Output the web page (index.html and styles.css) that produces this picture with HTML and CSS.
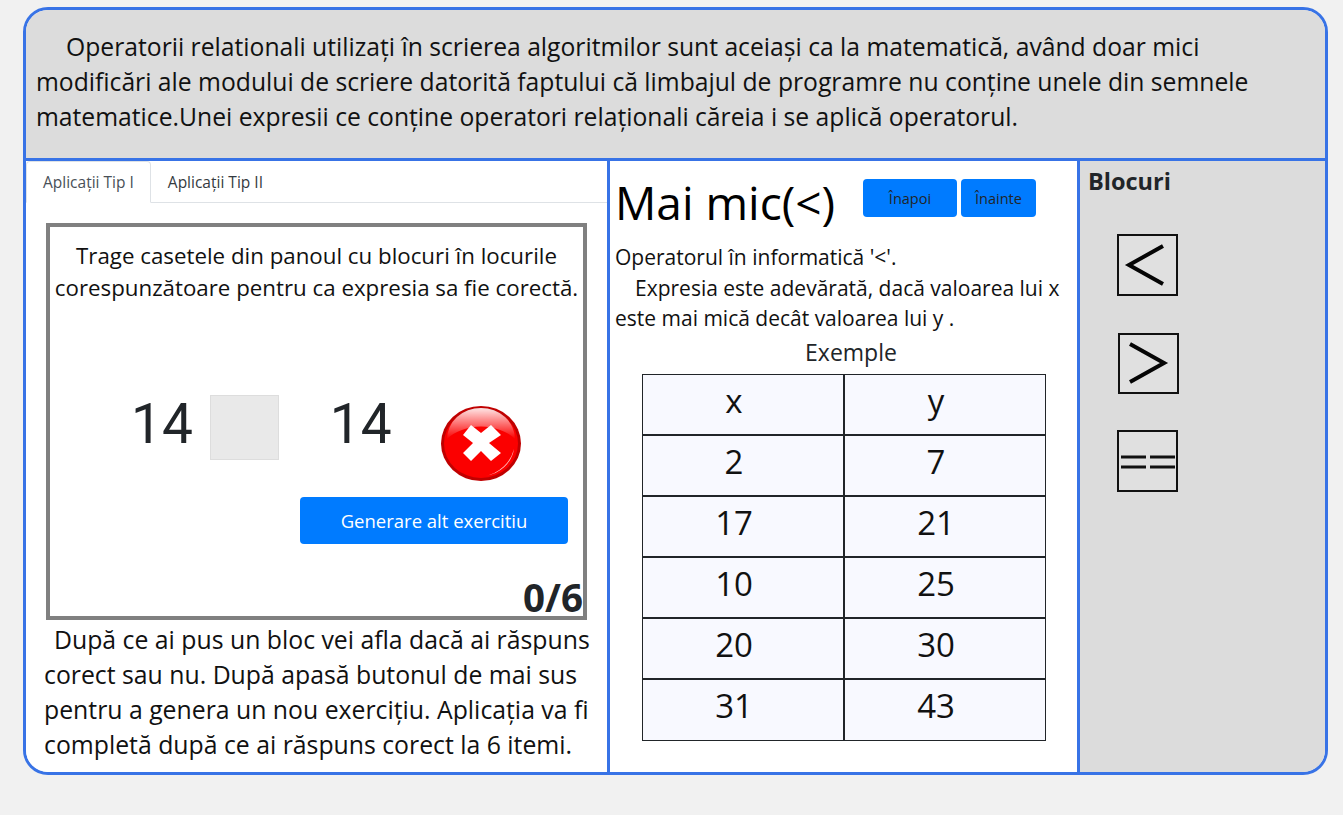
FILE: index.html
```html
<!DOCTYPE html>
<html lang="ro">
<head>
  <meta charset="UTF-8" />
  <meta name="viewport" content="width=device-width, initial-scale=1.0" />
  <title>Operatori relationali</title>
  <link rel="stylesheet" href="styles.css">
</head>
<body>
  <div class="frame">
    <div class="intro">
      <p>Operatorii relationali utilizați în scrierea algoritmilor sunt aceiași ca la matematică, având doar mici<br>modificări ale modului de scriere datorită faptului că limbajul de programre nu conține unele din semnele<br>matematice.Unei expresii ce conține operatori relaționali căreia i se aplică operatorul.</p>
    </div>
    <div class="columns">
      <div class="col-left">
        <ul class="tabs">
          <li class="tab active">Aplicații Tip I</li>
          <li class="tab">Aplicații Tip II</li>
        </ul>
        <div class="game">
          <p class="game-text">Trage casetele din panoul cu blocuri în locurile<br>corespunzătoare pentru ca expresia sa fie corectă.</p>
          <div class="expr">
            <span class="num">14</span>
            <div class="slot"></div>
            <span class="num num-right">14</span>
            <svg class="wrong" width="80" height="75" viewBox="0 0 80 75">
              <defs>
                <linearGradient id="shine" x1="0" y1="0" x2="0" y2="1">
                  <stop offset="0%" stop-color="#ffffff" stop-opacity="0.9"/>
                  <stop offset="100%" stop-color="#ffffff" stop-opacity="0"/>
                </linearGradient>
              </defs>
              <ellipse cx="40" cy="37.5" rx="40" ry="37.5" fill="#c00000"/>
              <ellipse cx="40" cy="37.5" rx="37" ry="34.5" fill="#fb0000"/>
              <path d="M6 33 A34 31 0 0 1 74 33 A42 30 0 0 0 6 33 Z" fill="url(#shine)"/>
              <path d="M44 70 A34 32 0 0 0 73 43 A38 36 0 0 1 44 70 Z" fill="#ffc8c8"/>
              <path d="M30 19 L40 27 L50 19 L60 29 L48 37 L60 47 L50 55 L40 45 L30 55 L22 47 L32 37 L22 29 Z" fill="#ffffff"/>
            </svg>
          </div>
          <button class="btn-next">Generare alt exercitiu</button>
          <div class="score">0/6</div>
        </div>
        <p class="help">După ce ai pus un bloc vei afla dacă ai răspuns<br>corect sau nu. După apasă butonul de mai sus<br>pentru a genera un nou exercițiu. Aplicația va fi<br>completă după ce ai răspuns corect la 6 itemi.</p>
      </div>

      <div class="col-mid">
        <div class="title-row">
          <h1>Mai mic(&lt;)</h1>
          <button class="btn-nav btn-back">Înapoi</button>
          <button class="btn-nav btn-fwd">Înainte</button>
        </div>
        <p class="desc">Operatorul în informatică '&lt;'.<br><span class="indent">Expresia este adevărată, dacă valoarea lui x</span><br>este mai mică decât valoarea lui y .</p>
        <div class="examples-title">Exemple</div>
        <table class="examples">
          <tr><td>x</td><td>y</td></tr>
          <tr><td>2</td><td>7</td></tr>
          <tr><td>17</td><td>21</td></tr>
          <tr><td>10</td><td>25</td></tr>
          <tr><td>20</td><td>30</td></tr>
          <tr><td>31</td><td>43</td></tr>
        </table>
      </div>

      <div class="col-right">
        <h3>Blocuri</h3>
        <svg class="block block-lt" width="61" height="62" viewBox="0 0 61 62">
          <rect x="1" y="1" width="59" height="60" fill="#e0e0e0" stroke="#111" stroke-width="2"/>
          <path d="M46 12 L12 31 L46 50" fill="none" stroke="#050505" stroke-width="4"/>
        </svg>
        <svg class="block block-gt" width="61" height="61" viewBox="0 0 61 61">
          <rect x="1" y="1" width="59" height="59" fill="#e0e0e0" stroke="#111" stroke-width="2"/>
          <path d="M12 11 L46 30 L12 49" fill="none" stroke="#050505" stroke-width="4"/>
        </svg>
        <svg class="block block-eq" width="61" height="62" viewBox="0 0 61 62">
          <rect x="1" y="1" width="59" height="60" fill="#e0e0e0" stroke="#111" stroke-width="2"/>
          <path d="M4 27 H29 M33 27 H58 M4 37 H29 M33 37 H58" fill="none" stroke="#111" stroke-width="3"/>
        </svg>
      </div>
    </div>
  </div>
</body>
</html>
```

FILE: styles.css
```css
* {
  box-sizing: border-box;
}

body {
  margin: 0;
  height: 815px;
  overflow: hidden;
  background-color: #f1f1f1;
  font-family: "Open Sans", "Noto Sans", sans-serif;
  color: #212529;
}

.frame {
  margin: 7px 0 0 23px;
  width: 1305px;
  height: 768px;
  border: 3px solid #3873e6;
  border-radius: 25px;
  overflow: hidden;
  display: flex;
  flex-direction: column;
}

.intro {
  height: 151px;
  flex: none;
  background-color: #dcdcdc;
  border-bottom: 3px solid #3873e6;
  padding: 19px 10px 0;
}

.intro p {
  margin: 0;
  font-size: 24.7px;
  line-height: 35px;
  color: #111;
  text-indent: 30px;
  white-space: nowrap;
}

.columns {
  flex: 1;
  display: flex;
  min-height: 0;
}

.col-left {
  width: 584px;
  flex: none;
  background-color: #fff;
  border-right: 3px solid #3873e6;
}

.tabs {
  list-style: none;
  margin: 0;
  padding: 0;
  height: 42px;
  display: flex;
  border-bottom: 1px solid #dee2e6;
}

.tab {
  font-size: 15.5px;
  line-height: 42px;
  height: 42px;
  padding: 0 16px 0 17px;
  color: #343a40;
}

.tab.active {
  border: 1px solid #dee2e6;
  border-bottom-color: #fff;
  border-radius: 4px 4px 0 0;
  color: #495057;
  line-height: 40px;
  padding: 0 16px;
}

.game {
  margin: 20px 0 0 20px;
  width: 541px;
  height: 397px;
  border: 4px solid #808080;
}

.game-text {
  margin: 13px 0 0;
  font-size: 22.3px;
  line-height: 32px;
  text-align: center;
  color: #111;
  white-space: nowrap;
}

.expr {
  margin: 91px 0 0;
  height: 86px;
  display: flex;
  align-items: flex-start;
}

.num {
  font-family: Roboto, sans-serif;
  font-weight: 400;
  font-size: 55px;
  line-height: 58px;
  margin-left: 81px;
}

.num-right {
  margin-left: 51px;
}

.slot {
  width: 69px;
  height: 65px;
  margin-left: 17px;
  background-color: #e9e9e9;
  border: 1px solid #ddd;
}

.wrong {
  margin: 11px 0 0 49px;
}

.btn-next {
  display: block;
  margin: 16px 0 0 250px;
  width: 268px;
  height: 47px;
  border: none;
  border-radius: 4px;
  background-color: #007bff;
  color: #fff;
  font-family: inherit;
  font-size: 18.5px;
}

.score {
  margin-top: 29px;
  text-align: right;
  font-size: 38.5px;
  font-weight: 700;
  line-height: 48px;
}

.help {
  margin: 2px 0 0 18px;
  font-size: 24.8px;
  line-height: 35px;
  color: #111;
  text-indent: 10px;
  white-space: nowrap;
}

.col-mid {
  width: 470px;
  flex: none;
  background-color: #fff;
  border-right: 3px solid #3873e6;
  padding: 0 0 0 5px;
}

.title-row {
  height: 79px;
  display: flex;
  align-items: flex-start;
}

h1 {
  margin: 13px 0 0;
  font-size: 46px;
  font-weight: 400;
  line-height: 56px;
  color: #000;
  width: 248px;
  white-space: nowrap;
}

.btn-nav {
  margin-top: 18px;
  height: 38px;
  border: none;
  border-radius: 4px;
  background-color: #007bff;
  color: #212529;
  font-family: inherit;
  font-size: 14.5px;
}

.btn-back {
  width: 94px;
}

.btn-fwd {
  width: 75px;
  margin-left: 4px;
}

.desc {
  margin: 2px 0 0;
  font-size: 21px;
  line-height: 30.5px;
  color: #111;
  white-space: nowrap;
}

.indent {
  margin-left: 20px;
}

.examples-title {
  margin-top: 2px;
  font-size: 23px;
  line-height: 32px;
  text-align: center;
  width: 472px;
}

.examples {
  margin: 6px 0 0 27px;
  width: 404px;
  height: 367px;
  border-collapse: separate;
  border-spacing: 0;
  table-layout: fixed;
}

.examples td {
  padding: 0 18px 8px 0;
  border: 1px solid #212529;
  background-color: #f8f9ff;
  text-align: center;
  font-size: 33px;
  color: #111;
}

.col-right {
  flex: 1;
  background-color: #dcdcdc;
  padding: 0 0 0 8px;
  display: flex;
  flex-direction: column;
  align-items: flex-start;
}

h3 {
  margin: 4px 0 0;
  font-size: 23.5px;
  font-weight: 700;
  line-height: 32px;
}

.block {
  display: block;
}

.block-lt {
  margin: 37px 0 0 29px;
}

.block-gt {
  margin: 37px 0 0 30px;
}

.block-eq {
  margin: 36px 0 0 29px;
}
```
